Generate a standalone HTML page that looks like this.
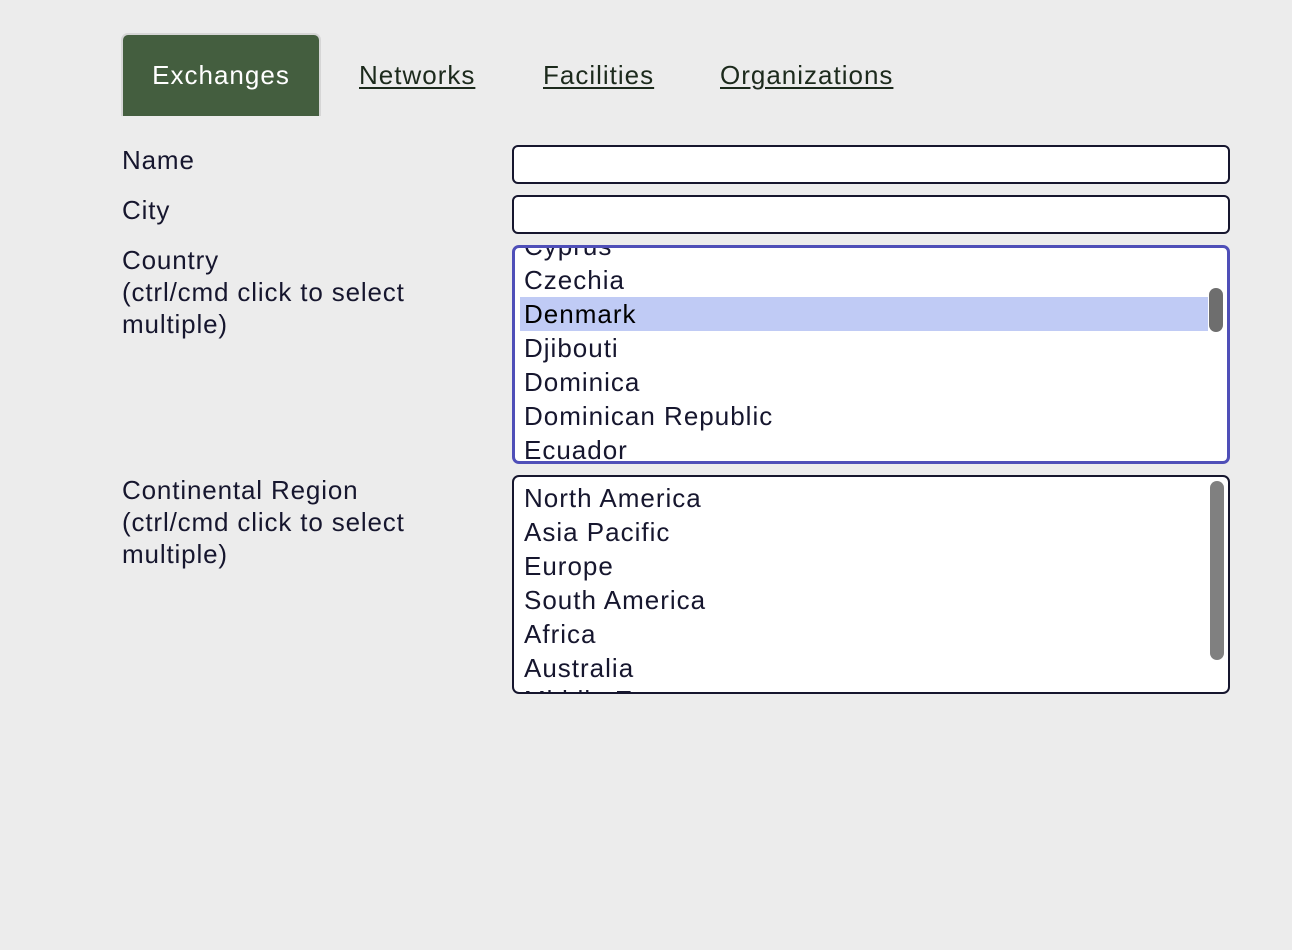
<!DOCTYPE html>
<html><head><style>
*{box-sizing:border-box;margin:0;padding:0}
body{width:1292px;height:950px;background:#ececec;font-family:"Liberation Sans",sans-serif;color:#16162e;position:relative;overflow:hidden}
.a{position:absolute}
.tab{left:121px;top:33px;width:200px;height:83px;background:#445e3f;border:2px solid #d6d6d6;border-bottom:none;border-radius:7px 7px 0 0;color:#fff;font-size:26px;letter-spacing:1px;text-align:center;line-height:80px}
.lnk{top:60px;font-size:26px;letter-spacing:1px;color:#1c2a1c;text-decoration:underline;text-underline-offset:3px}
.lbl{left:122px;font-size:26px;line-height:32px;letter-spacing:0.85px}
.inp{left:512px;width:718px;height:39px;background:#fff;border:2px solid #16162e;border-radius:6px}
.sel{left:512px;width:718px;height:219px;background:#fff;border-radius:7px;overflow:hidden}
.it{position:absolute;left:7px;font-size:26px;line-height:34px;height:34px;white-space:nowrap;padding-left:2px;letter-spacing:1px}
.sb{position:absolute;left:697px;width:14px;border-radius:7px}
</style></head><body>
<div class="a tab">Exchanges</div>
<div class="a lnk" style="left:359px">Networks</div>
<div class="a lnk" style="left:543px">Facilities</div>
<div class="a lnk" style="left:720px">Organizations</div>

<div class="a lbl" style="top:144px">Name</div>
<div class="a lbl" style="top:194px">City</div>
<div class="a lbl" style="top:244px">Country<br>(ctrl/cmd click to select<br>multiple)</div>
<div class="a lbl" style="top:474px">Continental Region<br>(ctrl/cmd click to select<br>multiple)</div>

<div class="a inp" style="top:145px"></div>
<div class="a inp" style="top:195px"></div>

<div class="a sel" style="top:245px;border:3px solid #4f4fb8">
 <div class="it" style="top:-19px">Cyprus</div>
 <div class="it" style="top:15px">Czechia</div>
 <div class="it" style="top:49px;left:5px;width:688px;background:#c0cbf5;color:#000;padding-left:4px">Denmark</div>
 <div class="it" style="top:83px">Djibouti</div>
 <div class="it" style="top:117px">Dominica</div>
 <div class="it" style="top:151px">Dominican Republic</div>
 <div class="it" style="top:185px">Ecuador</div>
 <div class="sb" style="top:40px;height:44px;background:#6e6e6e;left:694px"></div>
</div>

<div class="a sel" style="top:475px;border:2px solid #16162e">
 <div class="it" style="top:4px;left:8px">North America</div>
 <div class="it" style="top:38px;left:8px">Asia Pacific</div>
 <div class="it" style="top:72px;left:8px">Europe</div>
 <div class="it" style="top:106px;left:8px">South America</div>
 <div class="it" style="top:140px;left:8px">Africa</div>
 <div class="it" style="top:174px;left:8px">Australia</div>
 <div class="it" style="top:206px;left:8px">Middle East</div>
 <div class="sb" style="top:4px;height:179px;background:#808080;left:696px"></div>
</div>
</body></html>
